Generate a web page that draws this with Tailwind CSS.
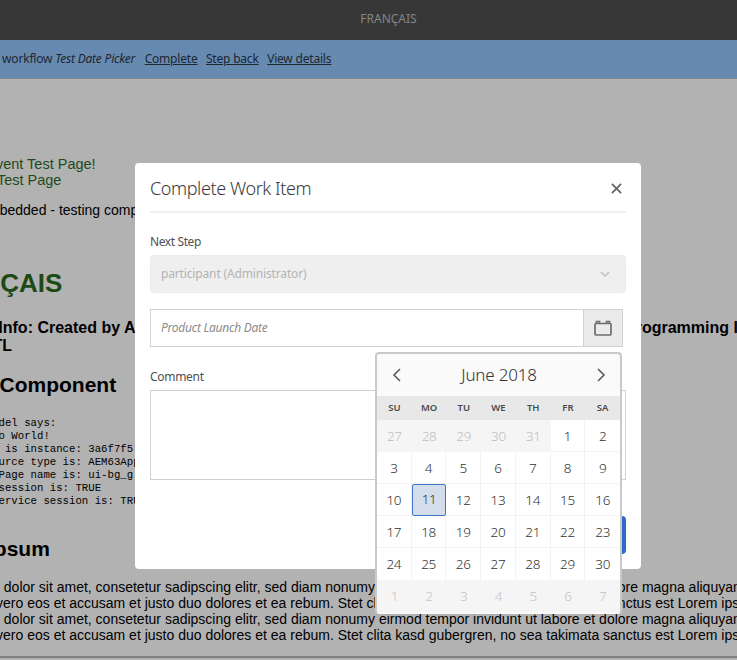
<!DOCTYPE html>
<html lang="en"><head><meta charset="utf-8"><title>Complete Work Item</title>
<script src="https://cdn.jsdelivr.net/npm/@tailwindcss/browser@4"></script></head>
<body class="m-0">
<div class="relative w-[737px] h-[660px] overflow-hidden bg-[#b2b2b2] font-['Noto_Sans',sans-serif]">
  <header class="h-10 bg-[#373737] flex items-center justify-center pl-[40px] pb-[2px] text-[12px] text-[#858585]">FRANÇAIS</header>
  <nav class="h-[39px] bg-[#678bb0] border-b border-[#7d8791] flex items-center whitespace-nowrap text-[12px] tracking-[-0.2px] text-[#1d2630] -ml-[47px] gap-[8.5px]">
    <span class="mr-[1px]">Running workflow <em>Test Date Picker</em></span>
    <a class="underline">Complete</a><a class="underline">Step back</a><a class="underline">View details</a>
  </nav>
  <main class="-ml-[78px] w-[1100px] whitespace-nowrap font-['Liberation_Sans',sans-serif] text-black">
    <p class="mt-[77px] text-[14.5px] leading-[16px] text-[#1e4a1a] pl-[3px]">A test for Event Test Page!</p>
    <p class="text-[14.5px] leading-[16px] text-[#1e4a1a] pl-[22px]">Sample Test Page</p>
    <p class="mt-[12px] text-[14px] leading-[20px] -ml-[18px]">Component embedded - testing components</p>
    <h1 class="mt-[47px] text-[26px] leading-[32px] font-bold text-[#1c4a17] ml-[6px]">FRANÇAIS</h1>
    <p class="mt-[20px] text-[16px] leading-[18px] font-bold -ml-[17px]"><span class="inline-block w-[720px]">Component Info: Created by Adobe Experience Manager 6.3 using a</span>Programming Interface</p>
    <p class="text-[16px] leading-[18px] font-bold pl-[59px]">HTL</p>
    <h2 class="mt-[16px] text-[21px] leading-[28px] font-bold -ml-[3px]">Sample Component</h2>
    <pre class="mt-[18px] ml-[38px] font-['Liberation_Mono',monospace] text-[10.7px] leading-[13px]">The model says:
  Hello World!
  This is instance: 3a6f7f5
  Resource type is: AEM63App
  The Page name is: ui-bg_g
  WCM session is: TRUE
     Service session is: TRUE</pre>
    <h2 class="mt-[27px] text-[21px] leading-[28px] font-bold -ml-[4px]">Lorem Ipsum</h2>
    <p class="mt-[16px] text-[14px] leading-[16px] -ml-[3px]">Lorem ipsum dolor sit amet, consetetur sadipscing elitr, sed diam nonumy eirmod tempor invidunt ut labore et dolore magna aliquyam erat, sed diam<br>voluptua. At vero eos et accusam et justo duo dolores et ea rebum. Stet clita kasd gubergren, no sea takimata sanctus est Lorem ipsum dolor sit amet.<br>Lorem ipsum dolor sit amet, consetetur sadipscing elitr, sed diam nonumy eirmod tempor invidunt ut labore et dolore magna aliquyam erat, sed diam<br>voluptua. At vero eos et accusam et justo duo dolores et ea rebum. Stet clita kasd gubergren, no sea takimata sanctus est Lorem ipsum dolor sit amet.</p>
  </main>
  <div class="absolute left-0 right-0 top-[656px] h-[2px] bg-[#808080]"></div>

  <section class="absolute left-[135px] top-[163px] w-[506px] h-[406px] bg-white rounded-[4px] px-[15px] text-[#4b4b4b]">
    <div class="h-[50px] pt-[2px] border-b-2 border-[#f0f0f0] flex items-center justify-between pr-[4px]">
      <h3 class="text-[18px] font-light tracking-[-0.4px] text-[#3a3a3a]">Complete Work Item</h3>
      <svg class="w-[11px] h-[11px]" viewBox="0 0 12 12" fill="none" stroke="#666" stroke-width="2"><path d="M1 1l10 10M11 1L1 11"/></svg>
    </div>
    <label class="block mt-[21px] text-[12px] tracking-[-0.4px] leading-[16px] text-[#505050]">Next Step</label>
    <div class="mt-[5px] h-[38px] bg-[#efefef] rounded-[4px] flex items-center justify-between pl-[10px] pr-[15px] text-[12px] tracking-[-0.15px] text-[#b3b3b3] border border-[#eaeaea]">
      <span>participant (Administrator)</span>
      <svg class="w-[10px] h-[6px]" viewBox="0 0 10 6" fill="none" stroke="#c0c0c0" stroke-width="1.5"><path d="M1 1l4 4 4-4"/></svg>
    </div>
    <div class="mt-[16px] w-[473px] h-[38px] border border-[#d0d0d0] flex">
      <div class="flex-1 flex items-center pl-[10px] text-[12px] tracking-[-0.25px] italic text-[#8c8c8c]">Product Launch Date</div>
      <div class="w-[39px] bg-[#ebebeb] border-l border-[#d0d0d0] flex items-center justify-center">
        <svg class="w-[18px] h-[16px]" viewBox="0 0 18 16" fill="none" stroke="#6e6e6e" stroke-width="1.7"><rect x="1" y="3.5" width="16" height="11.5" rx="1"/><path d="M2.5 3.5V1.5h3v2M12.5 3.5V1.5h3v2"/></svg>
      </div>
    </div>
    <label class="block mt-[22px] text-[12px] tracking-[-0.3px] leading-[16px] text-[#505050]">Comment</label>
    <div class="mt-[5px] h-[90px] border border-[#d0d0d0]"></div>
    <div class="mt-[36px] flex justify-end"><button class="h-[38px] w-[90px] rounded-[4px] bg-[#2d6bc4] text-white text-[13px]">Complete</button></div>

    <div class="absolute left-[240px] top-[189px] w-[247px] h-[262px] bg-[#fafafa] rounded-[4px] border-2 border-[#c9c9c9] border-b-0 text-[#333]">
      <div class="h-[42px] flex items-center justify-between pl-[15px] pr-[14px]">
        <svg class="w-[9px] h-[14px]" viewBox="0 0 9 14" fill="none" stroke="#5a5a5a" stroke-width="1.6"><path d="M8 1L2 7l6 6"/></svg>
        <span class="text-[17px] font-light tracking-[-0.2px]">June 2018</span>
        <svg class="w-[9px] h-[14px]" viewBox="0 0 9 14" fill="none" stroke="#5a5a5a" stroke-width="1.6"><path d="M1 1l6 6-6 6"/></svg>
      </div>
      <div class="h-[24px] bg-[#e8e8e8] grid grid-cols-7 items-center text-center text-[9.5px] font-semibold text-[#4a4a4a]">
        <span>SU</span><span>MO</span><span>TU</span><span>WE</span><span>TH</span><span>FR</span><span>SA</span>
      </div>
      <div class="grid grid-cols-7 auto-rows-[32px] text-[13.5px] font-light tracking-[-0.3px] text-center leading-[32px] bg-white">
        <span class="bg-[#f5f5f5] text-[#bdbdbd]">27</span><span class="bg-[#f5f5f5] text-[#bdbdbd]">28</span><span class="bg-[#f5f5f5] text-[#bdbdbd]">29</span><span class="bg-[#f5f5f5] text-[#bdbdbd]">30</span><span class="bg-[#f5f5f5] text-[#bdbdbd]">31</span><span class="border-r border-b border-[#f3f3f3]">1</span><span class="border-b border-[#f3f3f3]">2</span>
        <span class="border-r border-b border-[#f3f3f3]">3</span><span class="border-r border-b border-[#f3f3f3]">4</span><span class="border-r border-b border-[#f3f3f3]">5</span><span class="border-r border-b border-[#f3f3f3]">6</span><span class="border-r border-b border-[#f3f3f3]">7</span><span class="border-r border-b border-[#f3f3f3]">8</span><span class="border-b border-[#f3f3f3]">9</span>
        <span class="border-r border-b border-[#f3f3f3]">10</span><span class="bg-[#d4deeb] border-[1.5px] border-[#3f74c4] rounded-[2px] leading-[29px]">11</span><span class="border-r border-b border-[#f3f3f3]">12</span><span class="border-r border-b border-[#f3f3f3]">13</span><span class="border-r border-b border-[#f3f3f3]">14</span><span class="border-r border-b border-[#f3f3f3]">15</span><span class="border-b border-[#f3f3f3]">16</span>
        <span class="border-r border-b border-[#f3f3f3]">17</span><span class="border-r border-b border-[#f3f3f3]">18</span><span class="border-r border-b border-[#f3f3f3]">19</span><span class="border-r border-b border-[#f3f3f3]">20</span><span class="border-r border-b border-[#f3f3f3]">21</span><span class="border-r border-b border-[#f3f3f3]">22</span><span class="border-b border-[#f3f3f3]">23</span>
        <span class="border-r border-[#f3f3f3]">24</span><span class="border-r border-[#f3f3f3]">25</span><span class="border-r border-[#f3f3f3]">26</span><span class="border-r border-[#f3f3f3]">27</span><span class="border-r border-[#f3f3f3]">28</span><span class="border-r border-[#f3f3f3]">29</span><span>30</span>
        <span class="bg-[#f5f5f5] text-[#c4c4c4]">1</span><span class="bg-[#f5f5f5] text-[#c4c4c4]">2</span><span class="bg-[#f5f5f5] text-[#c4c4c4]">3</span><span class="bg-[#f5f5f5] text-[#c4c4c4]">4</span><span class="bg-[#f5f5f5] text-[#c4c4c4]">5</span><span class="bg-[#f5f5f5] text-[#c4c4c4]">6</span><span class="bg-[#f5f5f5] text-[#c4c4c4]">7</span>
      </div>
    </div>
  </section>
</div>
</body></html>
